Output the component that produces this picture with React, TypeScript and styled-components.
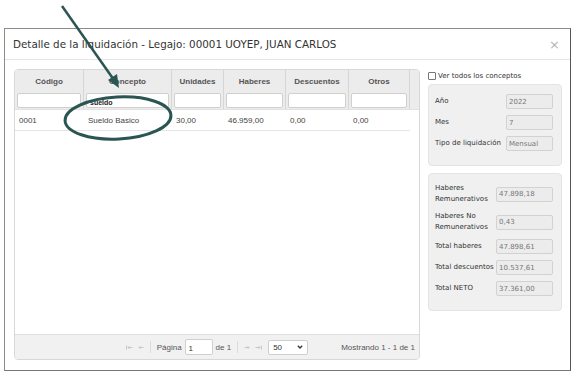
import React from "react";
import styled, { createGlobalStyle } from "styled-components";

const Global = createGlobalStyle`
  html, body { margin: 0; padding: 0; background: #fff; }
  body { font-family: "Liberation Sans", Arial, sans-serif; }
  * { box-sizing: border-box; }
`;

const Page = styled.div`
  position: relative;
  width: 579px;
  height: 382px;
  padding: 28px 0 0 4px;
  overflow: hidden;
  background: #fff;
`;

const Window = styled.div`
  width: 567px;
  height: 343px;
  border: 1px solid #8c8c8c;
  border-right-color: #555;
  border-bottom-color: #777;
  background: #fff;
  display: flex;
  flex-direction: column;
`;

const Header = styled.div`
  height: 31px;
  flex: none;
  border-bottom: 1px solid #e5e5e5;
  display: flex;
  align-items: center;
  justify-content: space-between;
  padding: 0 10px 0 8px;
`;

const Title = styled.div`
  font-family: "DejaVu Sans", Verdana, sans-serif;
  font-size: 10.35px;
  color: #333;
`;

const Close = styled.div`
  font-family: "DejaVu Sans", sans-serif;
  font-size: 13px;
  color: #b5b5b5;
  line-height: 1;
`;

const Body = styled.div`
  flex: 1;
  display: flex;
  gap: 8px;
  padding: 9px 8px 8px 9px;
  min-height: 0;
`;

const Grid = styled.div`
  width: 406px;
  height: 291px;
  border: 1px solid #d8d8d8;
  border-radius: 4px;
  display: flex;
  flex-direction: column;
  overflow: hidden;
`;

const GridHead = styled.div`
  height: 40px;
  flex: none;
  background: #ececec;
  border-bottom: 1px solid #e2e2e2;
  display: flex;
`;

const HeadCol = styled.div<{ $w: number }>`
  width: ${(p) => p.$w}px;
  flex: none;
  border-right: 1px solid #d6d6d6;
  display: flex;
  flex-direction: column;
  align-items: stretch;
  padding: 0 2px;
`;

const HeadLabel = styled.div`
  height: 23px;
  display: flex;
  align-items: center;
  justify-content: center;
  font-size: 8px;
  font-weight: bold;
  color: #555;
`;

const Filter = styled.div`
  height: 15px;
  background: #fff;
  border: 1px solid #cfcfcf;
  border-radius: 2px;
  font-size: 7px;
  line-height: 8px;
  font-weight: bold;
  color: #222;
  padding: 5px 3px 0;
`;

const GridBody = styled.div`
  flex: 1;
  background: #fff;
`;

const Row = styled.div`
  width: 395px;
  height: 21px;
  border-bottom: 1px solid #e6e6e6;
  display: flex;
  align-items: center;
`;

const Cell = styled.div<{ $w: number }>`
  width: ${(p) => p.$w}px;
  flex: none;
  padding-left: 4px;
  font-size: 8px;
  color: #444;
`;

const Pager = styled.div`
  height: 25px;
  flex: none;
  background: #f1f1f1;
  border-top: 1px solid #dedede;
  display: flex;
  align-items: center;
  padding: 0 4px 0 0;
  font-size: 8px;
  color: #555;
`;

const PagerCenter = styled.div`
  flex: 1;
  display: flex;
  align-items: center;
  justify-content: flex-end;
  gap: 3px;
  padding-right: 33px;
`;

const NavIcons = styled.div`
  display: flex;
  gap: 4px;
  align-items: center;
`;

const Sep = styled.div`
  width: 1px;
  height: 12px;
  background: #dcdcdc;
  margin: 0 3px;
`;

const PageInput = styled.div`
  width: 28px;
  height: 16px;
  background: #fff;
  border: 1px solid #cfcfcf;
  border-radius: 2px;
  font-size: 8px;
  color: #333;
  padding: 4px 0 0 3px;
`;

const Select = styled.div`
  width: 40px;
  height: 15px;
  background: #fff;
  border: 1px solid #cfcfcf;
  border-radius: 2px;
  display: flex;
  align-items: center;
  justify-content: space-between;
  padding: 0 4px;
  margin-left: 3px;
  font-size: 8px;
  color: #333;
`;

const Showing = styled.div`
  font-size: 8px;
  color: #555;
`;

const Side = styled.div`
  width: 134px;
  display: flex;
  flex-direction: column;
`;

const CheckRow = styled.label`
  height: 14px;
  display: flex;
  align-items: center;
  gap: 2px;
  font-family: "DejaVu Sans", Verdana, sans-serif;
  font-size: 7px;
  color: #333;
  margin-bottom: 1px;
`;

const Check = styled.span`
  width: 8px;
  height: 8px;
  border: 1px solid #777;
  border-radius: 1px;
  background: #fff;
`;

const Well = styled.div<{ $h: number; $mt: number; $gap: number; $pt: number }>`
  height: ${(p) => p.$h}px;
  margin-top: ${(p) => p.$mt}px;
  background: #f0f0f0;
  border: 1px solid #e4e4e4;
  border-radius: 4px;
  display: flex;
  flex-direction: column;
  gap: ${(p) => p.$gap}px;
  padding: ${(p) => p.$pt}px 8px 0 6px;
`;

const Field = styled.div<{ $h?: number }>`
  display: flex;
  align-items: center;
  justify-content: space-between;
  min-height: ${(p) => p.$h ?? 15}px;
`;

const Label = styled.div`
  font-family: "DejaVu Sans", Verdana, sans-serif;
  font-size: 7px;
  line-height: 11px;
  color: #333;
`;

const ValueBox = styled.div<{ $w: number }>`
  width: ${(p) => p.$w}px;
  height: 15px;
  background: #ececec;
  border: 1px solid #d2d2d2;
  border-radius: 2px;
  font-family: "DejaVu Sans", Verdana, sans-serif;
  font-size: 7px;
  color: #777;
  display: flex;
  align-items: center;
  padding-left: 2px;
`;

const Overlay = styled.svg`
  position: absolute;
  left: 0;
  top: 0;
  pointer-events: none;
`;

const cols = [
  { w: 69, t: "Código", f: "" },
  { w: 88, t: "Concepto", f: "sueldo" },
  { w: 52, t: "Unidades", f: "" },
  { w: 62, t: "Haberes", f: "" },
  { w: 63, t: "Descuentos", f: "" },
  { w: 61, t: "Otros", f: "" },
];

const row = ["0001", "Sueldo Basico", "30,00", "46.959,00", "0,00", "0,00"];

const Nav = ({ dir }: { dir: "l" | "r" }) => (
  <NavIcons>
    {(dir === "l" ? [true, false] : [false, true]).map((bar, i) => (
      <svg key={i} width="7" height="5" viewBox="0 0 7 5">
        {dir === "l" ? (
          <>
            {bar && <line x1="0.5" y1="0.5" x2="0.5" y2="4.5" stroke="#c8c8c8" />}
            <path d="M6.5 2.5H2M3.5 1L2 2.5 3.5 4" stroke="#c8c8c8" fill="none" />
          </>
        ) : (
          <>
            <path d="M0.5 2.5H5M3.5 1L5 2.5 3.5 4" stroke="#c8c8c8" fill="none" />
            {bar && <line x1="6.5" y1="0.5" x2="6.5" y2="4.5" stroke="#c8c8c8" />}
          </>
        )}
      </svg>
    ))}
  </NavIcons>
);

export default function App() {
  return (
    <Page>
      <Global />
      <Window>
        <Header>
          <Title>Detalle de la liquidación - Legajo: 00001 UOYEP, JUAN CARLOS</Title>
          <Close>×</Close>
        </Header>
        <Body>
          <Grid>
            <GridHead>
              {cols.map((c) => (
                <HeadCol key={c.t} $w={c.w}>
                  <HeadLabel>{c.t}</HeadLabel>
                  <Filter>{c.f}</Filter>
                </HeadCol>
              ))}
            </GridHead>
            <GridBody>
              <Row>
                {row.map((v, i) => (
                  <Cell key={i} $w={cols[i].w}>
                    {v}
                  </Cell>
                ))}
              </Row>
            </GridBody>
            <Pager>
              <PagerCenter>
                <Nav dir="l" />
                <Sep />
                <span>Página</span>
                <PageInput>1</PageInput>
                <span>de 1</span>
                <Sep />
                <Nav dir="r" />
                <Select>
                  <span>50</span>
                  <svg width="6" height="4" viewBox="0 0 6 4">
                    <path d="M0.8 0.8L3 3 5.2 0.8" stroke="#333" strokeWidth="1.3" fill="none" />
                  </svg>
                </Select>
              </PagerCenter>
              <Showing>Mostrando 1 - 1 de 1</Showing>
            </Pager>
          </Grid>
          <Side>
            <CheckRow>
              <Check />
              Ver todos los conceptos
            </CheckRow>
            <Well $h={82} $mt={0} $gap={6} $pt={9}>
              <Field>
                <Label>Año</Label>
                <ValueBox $w={47}>2022</ValueBox>
              </Field>
              <Field>
                <Label>Mes</Label>
                <ValueBox $w={47}>7</ValueBox>
              </Field>
              <Field>
                <Label>Tipo de liquidación</Label>
                <ValueBox $w={47}>Mensual</ValueBox>
              </Field>
            </Well>
            <Well $h={138} $mt={7} $gap={6} $pt={9}>
              <Field $h={22}>
                <Label>
                  Haberes
                  <br />
                  Remunerativos
                </Label>
                <ValueBox $w={57}>47.898,18</ValueBox>
              </Field>
              <Field $h={22}>
                <Label>
                  Haberes No
                  <br />
                  Remunerativos
                </Label>
                <ValueBox $w={57}>0,43</ValueBox>
              </Field>
              <Field>
                <Label>Total haberes</Label>
                <ValueBox $w={57}>47.898,61</ValueBox>
              </Field>
              <Field>
                <Label>Total descuentos</Label>
                <ValueBox $w={57}>10.537,61</ValueBox>
              </Field>
              <Field>
                <Label>Total NETO</Label>
                <ValueBox $w={57}>37.361,00</ValueBox>
              </Field>
            </Well>
          </Side>
        </Body>
      </Window>
      <Overlay width="579" height="382" viewBox="0 0 579 382">
        <line x1="62" y1="6" x2="114" y2="80" stroke="#2b5552" strokeWidth="2.5" />
        <polygon points="119,88 108,80 117,74" fill="#2b5552" />
        <ellipse
          cx="118"
          cy="118"
          rx="53"
          ry="21"
          fill="none"
          stroke="#2b5552"
          strokeWidth="3"
          transform="rotate(-3 118 118)"
        />
      </Overlay>
    </Page>
  );
}
